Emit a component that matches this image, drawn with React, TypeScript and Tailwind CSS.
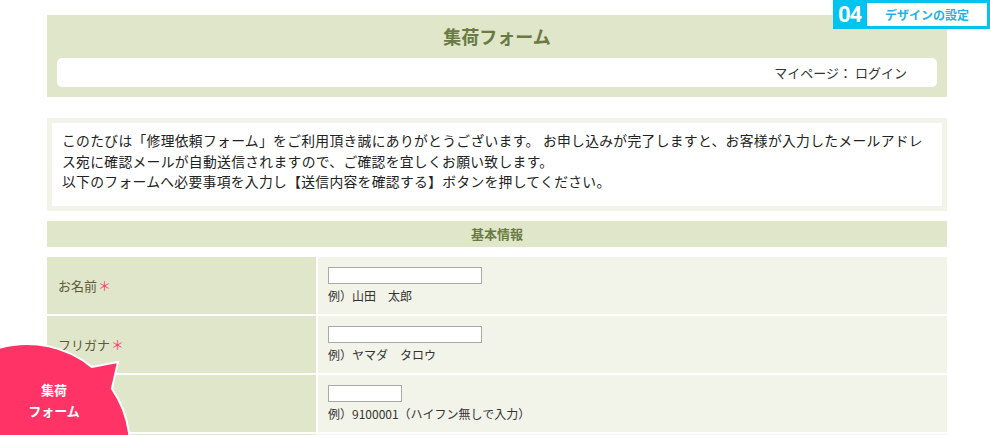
const font = { fontFamily: '"Noto Sans CJK JP", "Noto Sans", sans-serif' }

function Row({ label, required, inputW, example }: { label: string; required?: boolean; inputW: string; example: string }) {
  return (
    <div className="flex gap-[2px] h-[57px]">
      <div className="w-[269px] shrink-0 bg-[#e0e6c9] flex items-center pl-[11px] text-[13px] text-[#5b5a3c]">
        {label}
        {required && <span className="text-[#f0437a] ml-[1px]">＊</span>}
      </div>
      <div className="flex-1 bg-[#f2f4ea] pl-[10px] pt-[10px]">
        <div className={`${inputW} h-[17px] bg-white border border-[#a9a9a9]`} />
        <div className="text-[12px] text-[#333] mt-[3px] leading-[18px]">{example}</div>
      </div>
    </div>
  )
}

export default function App() {
  return (
    <div className="relative w-[990px] h-[435px] overflow-hidden bg-white" style={font}>
      <div className="ml-[47px] w-[900px] pt-[15px]">
        {/* header */}
        <div className="bg-[#e0e6c9] px-[10px] pb-[10px]">
          <h1 className="h-[43px] flex items-center justify-center text-[18px] font-bold text-[#6b7a44]">集荷フォーム</h1>
          <div className="bg-white rounded-[5px] h-[29px] flex items-center justify-end pr-[30px] text-[13px] text-[#333]">
            マイページ：&nbsp;ログイン
          </div>
        </div>

        {/* intro */}
        <div className="mt-[21px] bg-[#f2f4ea] p-[5px]">
          <div className="bg-white h-[83px] pl-[10px] pr-[4px] pt-[7px] text-[13.8px] leading-[20.5px] tracking-[0.3px] text-[#222] whitespace-nowrap">
            このたびは「修理依頼フォーム」をご利用頂き誠にありがとうございます。 お申し込みが完了しますと、お客様が入力したメールアドレ
            <br />
            ス宛に確認メールが自動送信されますので、ご確認を宜しくお願い致します。
            <br />
            以下のフォームへ必要事項を入力し【送信内容を確認する】ボタンを押してください。
          </div>
        </div>

        {/* section */}
        <div className="mt-[10px] h-[26px] bg-[#e0e6c9] flex items-center justify-center text-[13px] font-bold text-[#6b7a44]">
          基本情報
        </div>

        <div className="mt-[10px] flex flex-col gap-[2px]">
          <Row label="お名前" required inputW="w-[154px]" example="例）山田　太郎" />
          <Row label="フリガナ" required inputW="w-[154px]" example="例）ヤマダ　タロウ" />
          <Row label="" inputW="w-[74px]" example="例）9100001（ハイフン無しで入力）" />
          <div className="flex gap-[2px] h-[57px]">
            <div className="w-[269px] shrink-0 bg-[#e0e6c9]" />
            <div className="flex-1 bg-[#f2f4ea]" />
          </div>
        </div>
      </div>

      {/* top-right badge */}
      <div className="absolute top-0 right-0 w-[157px] h-[29px] bg-[#00c3f0] flex items-center pl-[5px] pr-[3px]">
        <span className="text-white font-bold text-[22px] leading-none tracking-[-1px] w-[29px]" style={{ fontFamily: '"Roboto", "Liberation Sans", sans-serif' }}>04</span>
        <div className="flex-1 h-[23px] bg-white flex items-center justify-center text-[12px] font-bold text-[#1fb3e8]">
          デザインの設定
        </div>
      </div>

      {/* pink bubble */}
      <svg className="absolute left-0 top-[330px]" width="140" height="105" viewBox="0 330 140 105">
        <path
          d="M 91.7 366.9 L 118 362 L 111.9 388.7 A 103 103 0 1 1 91.7 366.9 Z"
          fill="#ff3366"
          stroke="#ffffff"
          strokeWidth="2"
          strokeLinejoin="miter"
        />
      </svg>
      <div className="absolute left-[14px] top-[379px] w-[80px] text-center text-white font-bold text-[13px] leading-[21px]">
        集荷
        <br />
        フォーム
      </div>
    </div>
  )
}
